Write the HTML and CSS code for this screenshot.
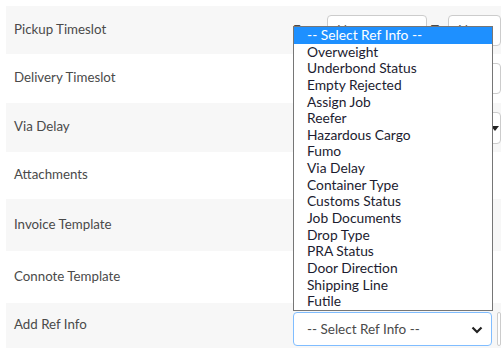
FILE: index.html
```html
<!DOCTYPE html>
<html>
<head>
<meta charset="utf-8">
<link rel="stylesheet" href="styles.css">
</head>
<body>
<div class="form">
  <div class="row gray h48">
    <div class="label">Pickup Timeslot</div>
    <div class="ctrl">
      <span class="mini">From</span>
      <input class="inp w100" value="None">
      <span class="mini to">To</span>
      <input class="inp grow" value="None">
    </div>
  </div>
  <div class="row h49">
    <div class="label">Delivery Timeslot</div>
    <div class="ctrl"><input class="inp grow" value=""></div>
  </div>
  <div class="row gray h49">
    <div class="label">Via Delay</div>
    <div class="ctrl"><div class="fakeselect grow"><span class="caret"></span></div></div>
  </div>
  <div class="row h47">
    <div class="label">Attachments</div>
    <div class="ctrl"></div>
  </div>
  <div class="row gray h52">
    <div class="label">Invoice Template</div>
    <div class="ctrl"></div>
  </div>
  <div class="row h52">
    <div class="label">Connote Template</div>
    <div class="ctrl"></div>
  </div>
  <div class="row gray h45">
    <div class="label">Add Ref Info</div>
    <div class="ctrl low">
      <div class="select focus">
        <span>-- Select Ref Info --</span>
        <svg class="chev" width="12" height="8" viewBox="0 0 12 8"><path d="M1.5 1.5 L6 6 L10.5 1.5" fill="none" stroke="#222" stroke-width="2.2"/></svg>
      </div>
      <div class="select other"></div>
    </div>
  </div>
  <ul class="dropdown">
    <li class="active">-- Select Ref Info --</li>
    <li>Overweight</li>
    <li>Underbond Status</li>
    <li>Empty Rejected</li>
    <li>Assign Job</li>
    <li>Reefer</li>
    <li>Hazardous Cargo</li>
    <li>Fumo</li>
    <li>Via Delay</li>
    <li>Container Type</li>
    <li>Customs Status</li>
    <li>Job Documents</li>
    <li>Drop Type</li>
    <li>PRA Status</li>
    <li>Door Direction</li>
    <li>Shipping Line</li>
    <li>Futile</li>
  </ul>
</div>
</body>
</html>
```

FILE: styles.css
```css
html, body { margin: 0; padding: 0; background: #fff; overflow: hidden; }
body { font-family: Lato, "Open Sans", sans-serif; color: #333; font-size: 14px; }
.form { position: relative; padding: 6px 0 0 6px; }
.row { display: flex; align-items: center; padding-left: 8px; }
.gray { background: #f7f7f7; }
.h48 { height: 48px; } .h49 { height: 49px; } .h47 { height: 47px; }
.h52 { height: 52px; } .h45 { height: 45px; }
.label { width: 279px; flex: none; color: #4a4a4a; font-size: 13.3px; padding-bottom: 3px; }
.ctrl { flex: 1; display: flex; align-items: center; min-width: 0; }
.ctrl.low { margin-top: 7px; }
.mini { width: 34px; flex: none; color: #4a4a4a; font-size: 13.3px; }
.to { width: 17px; margin-left: 4px; }
.inp { height: 31px; box-sizing: border-box; border: 1px solid #ccc; border-radius: 4px; padding: 0 9px; font: 13.3px Lato, sans-serif; color: #555; background: #fff; }
.w100 { width: 100px; flex: none; }
.grow { flex: 1; min-width: 0; }
.fakeselect { height: 32px; border: 1px solid #ccc; border-radius: 4px; background: #fff; position: relative; box-sizing: border-box; }
.caret { position: absolute; right: 1px; top: 13px; width: 0; height: 0; border-left: 4px solid transparent; border-right: 4px solid transparent; border-top: 5px solid #222; }
.select { height: 34px; box-sizing: border-box; border-radius: 4px; background: #fff; display: flex; align-items: center; }
.select.focus { width: 199px; flex: none; border: 1px solid #80bdff; padding: 0 8px 0 13px; justify-content: space-between; font-size: 13.5px; color: #4a4a4a; }
.select.other { flex: 1; margin-left: 5px; border: 1px solid #ccc; }
.chev { margin-top: 1px; }
.dropdown { position: absolute; left: 293px; top: 26px; width: 200px; box-sizing: border-box; margin: 0; padding: 0; list-style: none; border: 1px solid #767676; background: #fff; font-size: 13.8px; color: #1c1c30; }
.dropdown li { height: 16.65px; line-height: 16.65px; padding-left: 13px; white-space: nowrap; }
.dropdown li.active { background: #1e90ff; color: #fff; }
```
